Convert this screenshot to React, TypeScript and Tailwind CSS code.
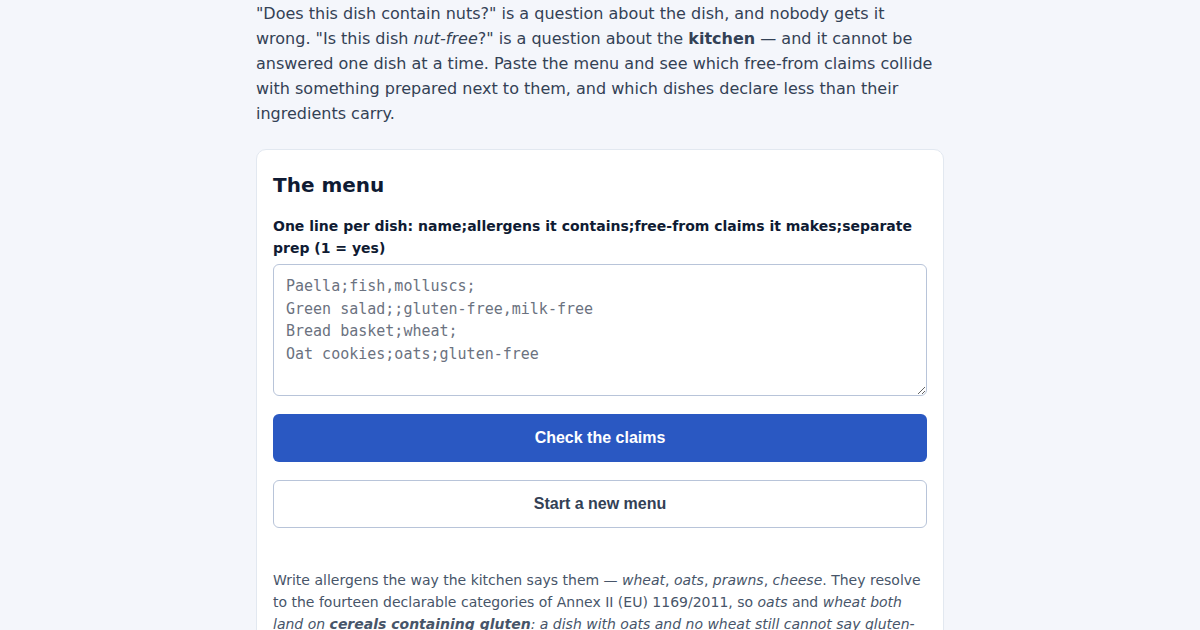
export default function App() {
  return (
    <div className="min-h-[630px] bg-[#f4f6fb] font-['DejaVu_Sans',sans-serif]">
      <div className="mx-auto w-[688px]">
        <p className="pt-[1px] text-[16px] leading-[25px] text-[#334155]">
          "Does this dish contain nuts?" is a question about the dish, and nobody gets it wrong. "Is this dish{" "}
          <em>nut-free</em>?" is a question about the <strong>kitchen</strong> — and it cannot be answered one dish at a
          time. Paste the menu and see which free-from claims collide with something prepared next to them, and which
          dishes declare less than their ingredients carry.
        </p>
        <div className="mt-[23px] rounded-[10px] border border-[#e2e8f0] bg-white px-[16px] pt-[21px] pb-[16px]">
          <h2 className="text-[20px] font-bold leading-[28px] text-[#0f1b33]">The menu</h2>
          <label className="mt-[16px] block text-[14px] font-bold leading-[22px] text-[#0f1b33]">
            One line per dish: name;allergens it contains;free-from claims it makes;separate prep (1 = yes)
          </label>
          <textarea
            className="mt-[5px] block h-[132px] w-full rounded-[6px] border border-[#b8c4d9] bg-white px-[12px] pt-[10px] pb-[8px] font-['DejaVu_Sans_Mono',monospace] text-[15px] leading-[22.5px] text-[#1e293b] placeholder:text-[#6b7280]"
            placeholder={"Paella;fish,molluscs;\nGreen salad;;gluten-free,milk-free\nBread basket;wheat;\nOat cookies;oats;gluten-free"}
          />
          <button className="mt-[18px] block h-[48px] w-full rounded-[6px] bg-[#2a58c2] font-['Liberation_Sans',sans-serif] text-[16px] font-bold text-white">
            Check the claims
          </button>
          <button className="mt-[18px] block h-[48px] w-full rounded-[6px] border border-[#b8c4d9] bg-white font-['Liberation_Sans',sans-serif] text-[16px] font-bold text-[#334155]">
            Start a new menu
          </button>
          <p className="mt-[41px] text-[14px] leading-[22px] text-[#475569]">
            Write allergens the way the kitchen says them — <em>wheat</em>, <em>oats</em>, <em>prawns</em>,{" "}
            <em>cheese</em>. They resolve to the fourteen declarable categories of Annex II (EU) 1169/2011, so{" "}
            <em>oats</em> and <em>wheat both land on </em>
            <strong>
              <em>cereals containing gluten</em>
            </strong>
            <em>: a dish with oats and no wheat still cannot say gluten-free.</em>
          </p>
        </div>
      </div>
    </div>
  );
}
